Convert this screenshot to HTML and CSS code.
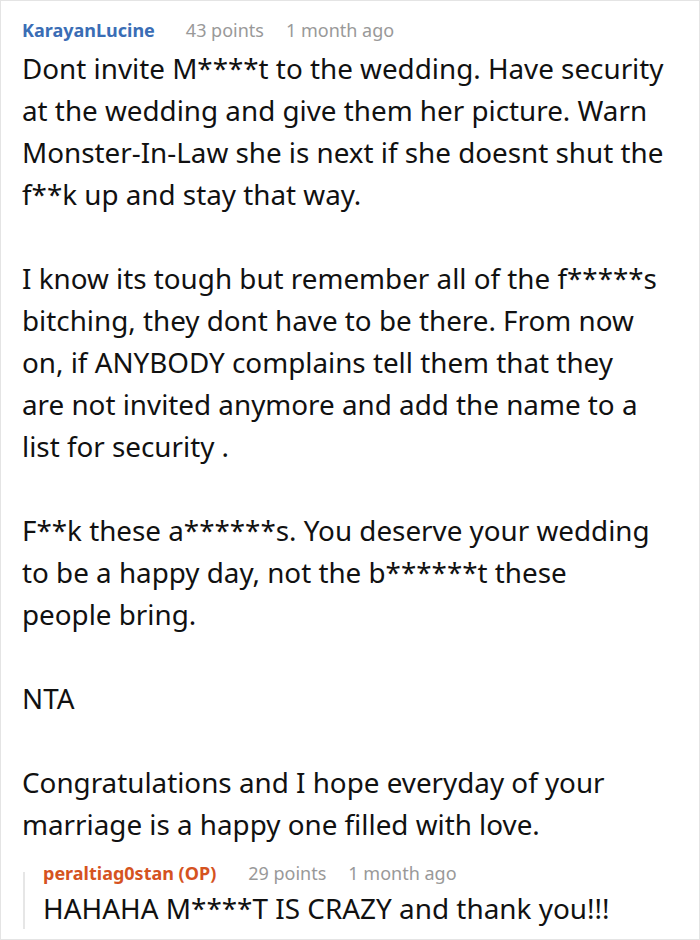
FILE: index.html
```html
<!DOCTYPE html>
<html>
<head>
<meta charset="utf-8">
<link rel="stylesheet" href="styles.css">
</head>
<body>
<div class="frame">
  <div class="comment">
    <div class="meta">
      <span class="author">KarayanLucine</span>
      <span class="points">43 points</span>
      <span class="time">1 month ago</span>
    </div>
    <div class="body">
      <p>Dont invite M****t to the wedding. Have security<br>at the wedding and give them her picture. Warn<br>Monster-In-Law she is next if she doesnt shut the<br>f**k up and stay that way.</p>
      <p>I know its tough but remember all of the f*****s<br>bitching, they dont have to be there. From now<br>on, if ANYBODY complains tell them that they<br>are not invited anymore and add the name to a<br>list for security .</p>
      <p>F**k these a******s. You deserve your wedding<br>to be a happy day, not the b******t these<br>people bring.</p>
      <p>NTA</p>
      <p>Congratulations and I hope everyday of your<br>marriage is a happy one filled with love.</p>
    </div>
    <div class="reply">
      <div class="meta reply-meta">
        <span class="author op">peraltiag0stan (OP)</span>
        <span class="points">29 points</span>
        <span class="time">1 month ago</span>
      </div>
      <div class="reply-body">HAHAHA M****T IS CRAZY and thank you!!!</div>
    </div>
  </div>
</div>
</body>
</html>
```

FILE: styles.css
```css
html, body {
  margin: 0;
  padding: 0;
  background: #ffffff;
}
.frame {
  width: 700px;
  height: 940px;
  box-sizing: border-box;
  border: 1px solid #e4e4e4;
  overflow: hidden;
  font-family: "Noto Sans", "Open Sans", sans-serif;
  color: #111111;
}
.comment {
  padding: 17px 20px 0 21px;
}
.meta {
  display: flex;
  font-size: 18px;
  line-height: 24px;
  height: 24px;
  white-space: nowrap;
}
.author {
  font-weight: 700;
  color: #3a6db5;
  margin-right: 31px;
}
.points {
  color: #999999;
  margin-right: 22px;
}
.time {
  color: #999999;
}
.body {
  margin-top: 5px;
  font-size: 27.8px;
  line-height: 42px;
  white-space: nowrap;
}
.body p {
  margin: 0 0 42px 0;
}
.body p:last-child {
  margin-bottom: 0;
}
.reply {
  position: relative;
  margin-top: 16px;
  padding-left: 21px;
}
.reply::before {
  content: "";
  position: absolute;
  left: 1px;
  top: 11px;
  bottom: -2px;
  width: 2px;
  background: #e6e6e6;
}
.reply-meta .author {
  margin-right: 32px;
}
.op {
  color: #d5531f;
}
.reply-body {
  font-size: 27.9px;
  line-height: 38px;
  margin-top: 4px;
  white-space: nowrap;
}
```
